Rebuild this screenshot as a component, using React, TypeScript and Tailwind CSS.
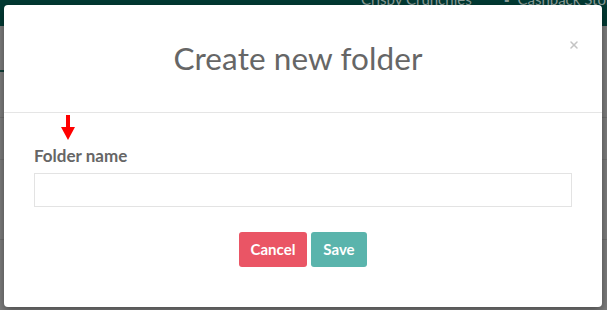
import { X } from 'lucide-react'

export default function App() {
    return (
        <div className="relative w-[607px] h-[310px] overflow-hidden bg-[#7d7d7d] font-['Lato',sans-serif]">
            {/* page behind the overlay */}
            <div className="h-[26px] bg-[#023a33] flex items-start pl-[361px] text-[15px] text-[#8a9c98] leading-none">
                <span className="-mt-[8px] whitespace-nowrap">Crispy Crunchies</span>
                <span className="mx-[16px] h-[5px] w-px bg-[#6d807c]" />
                <span className="-mt-[8px] whitespace-nowrap">▪&nbsp;&nbsp;Cashback Store</span>
            </div>
            <div className="flex flex-col text-[#3e3e3e] text-[18px]">
                <div className="h-[46px] border-b-2 border-[#11403a] w-[4px]" />
                <div className="h-[46px] border-b border-[#6f6f6f]" />
                <div className="h-[42px] border-b border-[#727272]" />
                <div className="h-[80px] border-b border-[#6f6f6f]" />
            </div>

            {/* modal */}
            <div className="absolute left-[4px] top-[5px] w-[598px] h-[302px] bg-white rounded-[4px] shadow-[0_3px_9px_rgba(0,0,0,0.4)]">
                <div className="relative h-[108px] border-b border-[#e5e5e5] flex items-center justify-center pr-[10px]">
                    <h2 className="text-[31.5px] text-[#666] font-normal tracking-[0.1px] mt-[1px]">Create new folder</h2>
                    <button className="absolute right-[22px] top-[34px] text-[#c4c4c4]">
                        <X className="w-[12px] h-[12px]" strokeWidth={3} />
                    </button>
                </div>
                <div className="px-[30px] pt-[2px]">
                    <div className="relative h-[58px]">
                        <svg className="absolute left-[27px] top-0" width="14" height="26" viewBox="0 0 14 26">
                            <rect x="5" y="0" width="4" height="14" fill="#f00" />
                            <polygon points="0,12 14,12 7,25" fill="#f00" />
                        </svg>
                        <label className="absolute left-0 bottom-[5px] text-[17px] font-bold text-[#666]">Folder name</label>
                    </div>
                    <input className="w-full h-[34px] border border-[#e3e3e3] outline-none px-3" />
                    <div className="flex justify-center gap-[4px] mt-[25px]">
                        <button className="w-[68px] h-[35px] rounded-[3px] bg-[#ea5565] text-white font-bold text-[15px]">Cancel</button>
                        <button className="w-[56px] h-[35px] rounded-[3px] bg-[#5ab4ac] text-white font-bold text-[15px]">Save</button>
                    </div>
                </div>
            </div>
        </div>
    )
}
